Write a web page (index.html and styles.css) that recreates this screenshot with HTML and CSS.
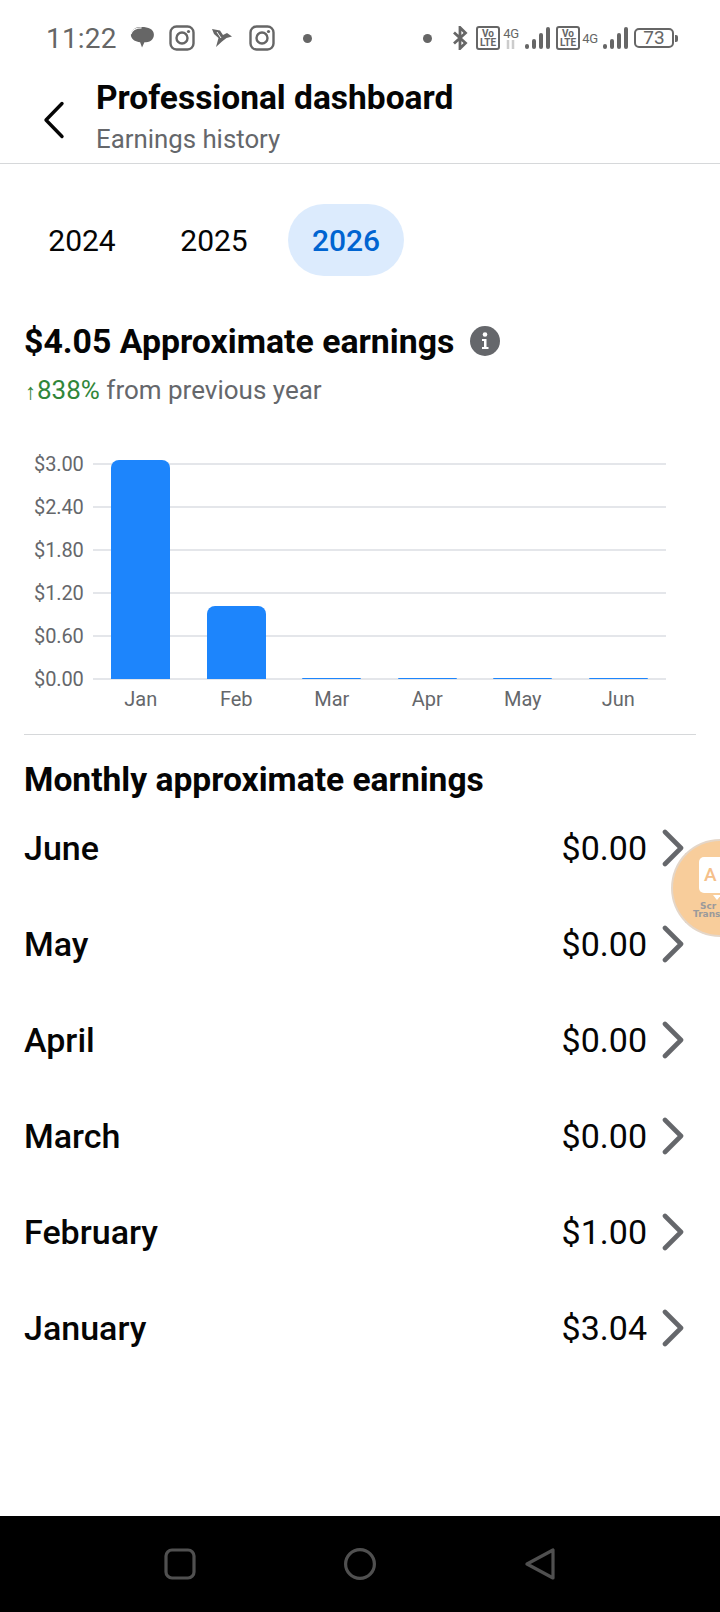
FILE: index.html
```html
<!DOCTYPE html>
<html lang="en">
<head>
    <meta charset="UTF-8">
    <meta name="viewport" content="width=device-width, initial-scale=1.0">
    <title>Earnings history</title>
    <link rel="stylesheet" href="styles.css">
</head>
<body>
    <div class="status-bar">
        <div class="status-left">
            <span class="clock">11:22</span>
            <svg class="ic-chat" viewBox="0 0 26 26"><path d="M5 3C8 1 17 1 21 3.500C26 6 26 13 22 15.500C20 17 17 17.500 15 17.500L12.500 23L10.500 17.500C6 17 2 15 1 11C.5 8 2 4.500 5 3Z" fill="#666"/><path d="M1 9C2 5 6 2.500 12 2.500" fill="none" stroke="#fff" stroke-width="1.200"/></svg>
            <svg class="ic-insta" viewBox="0 0 26 26"><rect x="1.500" y="1.500" width="23" height="23" rx="6" fill="none" stroke="#666" stroke-width="2.400"/><circle cx="13" cy="13" r="5.500" fill="none" stroke="#666" stroke-width="2.400"/><circle cx="19.500" cy="6.500" r="1.600" fill="#666"/></svg>
            <svg class="ic-bird" viewBox="0 0 22 22"><path d="M1 2L9 3.500L12 8L16 6L21 9.500L15.500 11L11 14.500L5 20L7.500 11L3 7Z" fill="#666"/><path d="M6 5L10 11" stroke="#fff" stroke-width="1"/></svg>
            <svg class="ic-insta" viewBox="0 0 26 26"><rect x="1.500" y="1.500" width="23" height="23" rx="6" fill="none" stroke="#666" stroke-width="2.400"/><circle cx="13" cy="13" r="5.500" fill="none" stroke="#666" stroke-width="2.400"/><circle cx="19.500" cy="6.500" r="1.600" fill="#666"/></svg>
            <span class="dot dot-left"></span>
        </div>
        <div class="status-right">
            <span class="dot"></span>
            <svg class="ic-bt" viewBox="0 0 16 24"><path d="M2 6.500L13.500 17L8 22.500V1.500L13.500 7L2 17.500" fill="none" stroke="#666" stroke-width="2.800"/></svg>
            <span class="volte"><b>Vo</b><b>LTE</b></span>
            <span class="net net-first">4G<svg viewBox="0 0 14 9"><path d="M4 0V9M9 0V9" stroke="#ccc" stroke-width="2.500"/></svg></span>
            <svg class="ic-signal" viewBox="0 0 25 22"><rect x="0" y="17" width="4" height="5" rx="2" fill="#666"/><rect x="7" y="12" width="4" height="10" rx="2" fill="#666"/><rect x="14" y="6" width="4" height="16" rx="2" fill="#666"/><rect x="21" y="0" width="4" height="22" rx="2" fill="#666"/></svg>
            <span class="volte"><b>Vo</b><b>LTE</b></span>
            <span class="net">4G</span>
            <svg class="ic-signal" viewBox="0 0 25 22"><rect x="0" y="17" width="4" height="5" rx="2" fill="#666"/><rect x="7" y="12" width="4" height="10" rx="2" fill="#666"/><rect x="14" y="6" width="4" height="16" rx="2" fill="#666"/><rect x="21" y="0" width="4" height="22" rx="2" fill="#666"/></svg>
            <span class="battery">73</span>
            <span class="battery-tip"></span>
        </div>
    </div>

    <header class="top-bar">
        <svg class="back" viewBox="0 0 22 38"><path d="M19 2.500L3 19L19 35.500" fill="none" stroke="#050505" stroke-width="3.400" stroke-linecap="round" stroke-linejoin="round"/></svg>
        <div>
            <div class="top-title">Professional dashboard</div>
            <div class="top-sub">Earnings history</div>
        </div>
    </header>

    <main class="content">
        <div class="years">
            <span class="year">2024</span>
            <span class="year">2025</span>
            <span class="year year-active">2026</span>
        </div>

        <div class="total">
            <h1>$4.05 Approximate earnings</h1>
            <svg class="info" viewBox="0 0 30 30"><circle cx="15" cy="15" r="15" fill="#65676b"/><circle cx="15" cy="8.500" r="2.300" fill="#fff"/><path d="M12 13H16.500V21H18.500V23H12V21H14V15H12Z" fill="#fff"/></svg>
        </div>
        <div class="change"><span class="up"><span class="arrow">↑</span>838%</span> from previous year</div>

        <div class="chart">
            <div class="grid-row"><span>$3.00</span><i></i></div>
            <div class="grid-row"><span>$2.40</span><i></i></div>
            <div class="grid-row"><span>$1.80</span><i></i></div>
            <div class="grid-row"><span>$1.20</span><i></i></div>
            <div class="grid-row"><span>$0.60</span><i></i></div>
            <div class="grid-row"><span>$0.00</span><i></i></div>
            <div class="bars">
                <div class="bar-col"><div class="bar" style="height: 219px"></div></div>
                <div class="bar-col"><div class="bar" style="height: 73px"></div></div>
                <div class="bar-col"><div class="bar" style="height: 1.500px"></div></div>
                <div class="bar-col"><div class="bar" style="height: 1.500px"></div></div>
                <div class="bar-col"><div class="bar" style="height: 1.500px"></div></div>
                <div class="bar-col"><div class="bar" style="height: 1.500px"></div></div>
            </div>
            <div class="months">
                <span>Jan</span><span>Feb</span><span>Mar</span><span>Apr</span><span>May</span><span>Jun</span>
            </div>
        </div>

        <h2>Monthly approximate earnings</h2>
        <div class="rows">
            <div class="row"><span class="row-name">June</span><span class="row-value">$0.00</span><svg class="chevron" viewBox="0 0 22 38"><path d="M3 3L19 19L3 35" fill="none" stroke="#65676b" stroke-width="4.600" stroke-linecap="round" stroke-linejoin="round"/></svg></div>
            <div class="row"><span class="row-name">May</span><span class="row-value">$0.00</span><svg class="chevron" viewBox="0 0 22 38"><path d="M3 3L19 19L3 35" fill="none" stroke="#65676b" stroke-width="4.600" stroke-linecap="round" stroke-linejoin="round"/></svg></div>
            <div class="row"><span class="row-name">April</span><span class="row-value">$0.00</span><svg class="chevron" viewBox="0 0 22 38"><path d="M3 3L19 19L3 35" fill="none" stroke="#65676b" stroke-width="4.600" stroke-linecap="round" stroke-linejoin="round"/></svg></div>
            <div class="row"><span class="row-name">March</span><span class="row-value">$0.00</span><svg class="chevron" viewBox="0 0 22 38"><path d="M3 3L19 19L3 35" fill="none" stroke="#65676b" stroke-width="4.600" stroke-linecap="round" stroke-linejoin="round"/></svg></div>
            <div class="row"><span class="row-name">February</span><span class="row-value">$1.00</span><svg class="chevron" viewBox="0 0 22 38"><path d="M3 3L19 19L3 35" fill="none" stroke="#65676b" stroke-width="4.600" stroke-linecap="round" stroke-linejoin="round"/></svg></div>
            <div class="row"><span class="row-name">January</span><span class="row-value">$3.04</span><svg class="chevron" viewBox="0 0 22 38"><path d="M3 3L19 19L3 35" fill="none" stroke="#65676b" stroke-width="4.600" stroke-linecap="round" stroke-linejoin="round"/></svg></div>
        </div>
    </main>

    <div class="float-bubble">
        <div class="float-card">A</div>
        <div class="float-pin"></div>
        <div class="float-text float-scr">Scr</div>
        <div class="float-text float-trans">Trans</div>
    </div>

    <nav class="nav-bar">
        <svg class="nav-icon" viewBox="0 0 32 32"><rect x="2" y="2" width="28" height="28" rx="6" fill="none" stroke="#505050" stroke-width="3.200"/></svg>
        <svg class="nav-icon" viewBox="0 0 32 32"><circle cx="16" cy="16" r="14.400" fill="none" stroke="#505050" stroke-width="3.200"/></svg>
        <svg class="nav-icon" viewBox="0 0 32 32"><path d="M29 2V30L3 16Z" fill="none" stroke="#505050" stroke-width="3.200" stroke-linejoin="round"/></svg>
    </nav>
</body>
</html>
```

FILE: styles.css
```css
* {
    box-sizing: border-box;
}
body {
    font-family: Roboto, Arial, sans-serif;
    margin: 0;
    width: 720px;
    height: 1612px;
    background-color: white;
    color: #050505;
    display: flex;
    flex-direction: column;
    overflow: hidden;
    position: relative;
}

/* status bar */
.status-bar {
    height: 76px;
    padding: 0 42px 0 46px;
    display: flex;
    justify-content: space-between;
    align-items: center;
    color: #666;
}
.status-left,
.status-right {
    display: flex;
    align-items: center;
}
.clock {
    font-size: 28px;
    letter-spacing: 0.2px;
    margin-right: 13px;
}
.ic-chat {
    width: 25px;
    height: 26px;
    margin-right: 14px;
}
.ic-insta {
    width: 26px;
    height: 26px;
}
.ic-bird {
    width: 22px;
    height: 22px;
    margin: 0 16px 0 16px;
}
.dot {
    width: 9px;
    height: 9px;
    border-radius: 50%;
    background-color: #666;
}
.dot-left {
    margin-left: 28px;
}
.ic-bt {
    width: 16px;
    height: 24px;
    margin: 0 8px 0 20px;
}
.volte {
    width: 24px;
    height: 24px;
    border: 2.500px solid #666;
    border-radius: 3px;
    display: flex;
    flex-direction: column;
    align-items: center;
    justify-content: center;
}
.volte b {
    font-size: 10px;
    line-height: 9px;
    font-weight: 700;
}
.net {
    width: 16px;
    margin-left: 2px;
    font-size: 13px;
    line-height: 13px;
    height: 24px;
    display: flex;
    flex-direction: column;
    align-items: center;
    justify-content: center;
    letter-spacing: -0.3px;
}
.net-first {
    margin-left: 3px;
    margin-right: 1px;
}
.net svg {
    width: 14px;
    height: 9px;
}
.ic-signal {
    width: 25px;
    height: 22px;
    margin-left: 5px;
    margin-right: 6px;
    align-self: center;
}
.battery {
    width: 40px;
    height: 20px;
    border: 2.500px solid #666;
    border-radius: 5px;
    font-size: 19px;
    line-height: 15px;
    text-align: center;
    margin-left: 0;
}
.battery-tip {
    width: 3px;
    height: 7px;
    background-color: #666;
    border-radius: 0 2px 2px 0;
    margin-left: 1px;
}

/* header */
.top-bar {
    height: 88px;
    padding: 0 0 4px 43px;
    display: flex;
    align-items: center;
    gap: 31px;
    border-bottom: 1.500px solid #d6d8da;
}
.back {
    width: 22px;
    height: 38px;
    margin-top: 4px;
}
.top-title {
    font-size: 33.500px;
    font-weight: 700;
    line-height: 40px;
    margin-top: -2px;
}
.top-sub {
    font-size: 25.800px;
    line-height: 32px;
    margin-top: 5px;
    color: #65676b;
}

/* content */
.content {
    flex: 1;
    padding: 40px 24px 0;
}
.years {
    display: flex;
    gap: 16px;
}
.year {
    width: 116px;
    height: 72px;
    border-radius: 36px;
    font-size: 30px;
    display: flex;
    align-items: center;
    justify-content: center;
}
.year-active {
    background-color: #dcebfd;
    color: #0064d1;
    font-weight: 500;
}
.total {
    display: flex;
    align-items: center;
    gap: 16px;
    margin-top: 44px;
    height: 42px;
}
h1 {
    margin: 0;
    font-size: 33.800px;
    font-weight: 700;
}
.info {
    width: 30px;
    height: 30px;
}
.change {
    margin-top: 11px;
    font-size: 26px;
    line-height: 34px;
    color: #65676b;
}
.up {
    color: #31863a;
}
.arrow {
    font-size: 22px;
    padding: 0 1px;
}

/* chart */
.chart {
    position: relative;
    margin-top: 33px;
    height: 293px;
    border-bottom: 1.500px solid #d6d8da;
}
.grid-row {
    height: 43.100px;
    display: flex;
    align-items: center;
    font-size: 20px;
    color: #65676b;
}
.grid-row span {
    width: 69px;
    flex: none;
    padding-left: 10px;
    letter-spacing: -0.1px;
}
.grid-row i {
    flex: none;
    width: 573px;
    height: 2px;
    background-color: #e4e6ea;
}
.bars {
    position: absolute;
    left: 69px;
    top: 0;
    width: 573px;
    height: 237px;
    display: flex;
}
.bar-col {
    flex: 1;
    display: flex;
    align-items: flex-end;
    justify-content: center;
}
.bar {
    width: 59px;
    background-color: #1d85fc;
    border-radius: 8px 8px 0 0;
}
.months {
    position: absolute;
    left: 69px;
    top: 245px;
    width: 573px;
    display: flex;
    font-size: 20px;
    color: #65676b;
}
.months span {
    flex: 1;
    text-align: center;
}

/* monthly list */
h2 {
    margin: 24px 0 0;
    font-size: 33.600px;
    font-weight: 700;
    line-height: 42px;
}
.rows {
    margin-top: -1px;
}
.row {
    height: 96px;
    display: flex;
    align-items: center;
    font-size: 34px;
}
.row-name {
    flex: 1;
    font-weight: 480;
}
.row-value {
    margin-right: 15px;
}
.chevron {
    width: 22px;
    height: 38px;
    margin-right: 12px;
}

/* floating translate bubble, cut by the right edge of the screen */
.float-bubble {
    position: absolute;
    left: 671px;
    top: 839px;
    width: 49px;
    height: 98px;
    border-radius: 49px 0 0 49px;
    background-color: #f8cd9b;
    border: 2px solid #e4d6c8;
    border-right: 0;
    overflow: hidden;
}
.float-card {
    position: absolute;
    left: 26px;
    top: 16px;
    width: 34px;
    height: 36px;
    border-radius: 5px;
    background-color: white;
    color: #f5c08a;
    font-size: 19px;
    font-weight: 500;
    padding-left: 5px;
    line-height: 36px;
}
.float-pin {
    position: absolute;
    left: 40px;
    top: 54px;
    border-left: 4px solid transparent;
    border-right: 4px solid transparent;
    border-top: 5px solid white;
}
.float-text {
    position: absolute;
    font-family: "DejaVu Sans", sans-serif;
    font-size: 9px;
    line-height: 9px;
    font-weight: 700;
    color: #9b9a9b;
}
.float-scr {
    left: 27px;
    top: 61px;
}
.float-trans {
    left: 20px;
    top: 69px;
}

/* android nav */
.nav-bar {
    height: 96px;
    background-color: black;
    display: flex;
    align-items: center;
    padding: 0 0 0 164px;
    gap: 148px;
}
.nav-icon {
    width: 32px;
    height: 32px;
}
```
